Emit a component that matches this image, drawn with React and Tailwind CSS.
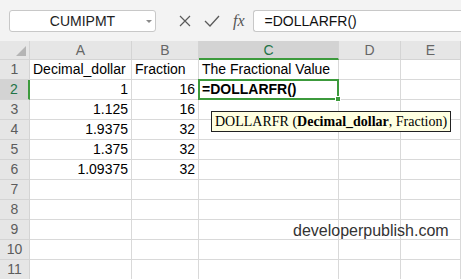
const cols = ["A", "B", "C", "D", "E"];

const rows = [
  ["Decimal_dollar", "Fraction", "The Fractional Value", "", ""],
  ["1", "16", "", "", ""],
  ["1.125", "16", "", "", ""],
  ["1.9375", "32", "", "", ""],
  ["1.375", "32", "", "", ""],
  ["1.09375", "32", "", "", ""],
  ["", "", "", "", ""],
  ["", "", "", "", ""],
  ["", "", "", "", ""],
  ["", "", "", "", ""],
  ["", "", "", "", ""]
];

const isNum = v => /^[0-9.]+$/.test(v);

const Toolbar = () => {
  return <div className="flex h-[41px] items-start bg-[#f3f3f3] pt-[10px]">
      <div className="relative ml-[9px] flex h-[22px] w-[147px] items-center justify-center rounded-[3px] border border-[#c8c8c8] bg-white text-[14px] text-[#222]">
        CUMIPMT
        <span className="absolute right-[3px] top-[9px] h-0 w-0 border-x-[3px] border-t-[3px] border-x-transparent border-t-[#8a8a8a]" />
      </div>
      <div className="ml-[22px] flex h-[22px] items-center gap-[13px] text-[#555]">
        <svg width="12" height="12" viewBox="0 0 12 12" className="ml-[1px]">
          <path d="M1 1 L11 11 M11 1 L1 11" stroke="#5a5a5a" strokeWidth="1.2" fill="none" />
        </svg>
        <svg width="16" height="12" viewBox="0 0 16 12">
          <path d="M1 6 L6 11 L15 1" stroke="#5a5a5a" strokeWidth="1.3" fill="none" />
        </svg>
        <span className="font-['Liberation_Serif',serif] text-[16px] italic leading-none text-[#555]">fx</span>
      </div>
      <div className="ml-[8px] flex h-[22px] flex-1 items-center rounded-l-[3px] border border-r-0 border-[#c8c8c8] bg-white pl-[11px] text-[14px] text-[#111]">
        =DOLLARFR()
      </div>
    </div>;
};

const Sheet = () => {
  return <div className="grid grid-cols-[30px_102px_67px_140px_62px_1fr] text-[14px]">
      <div className="relative h-[19px] border-b border-r border-[#d4d4d4] bg-[#e6e6e6]">
        <span className="absolute bottom-[3px] right-[3px] h-0 w-0 border-b-[10px] border-l-[10px] border-b-[#b5b5b5] border-l-transparent" />
      </div>
      {cols.map(c => <div key={c} className={c === "C" ? "flex h-[19px] items-center justify-center border-b-2 border-r border-b-[#3c9a3c] border-r-[#d4d4d4] bg-[#d3d3d3] pt-[1px] text-[#217346]" : "flex h-[19px] items-center justify-center border-b border-r border-[#d4d4d4] bg-[#e6e6e6] text-[#666]"}>
          {c}
        </div>)}
      {rows.map((r, i) => <Row key={i} n={i + 1} cells={r} />)}
    </div>;
};

const Row = ({
  n,
  cells
}) => {
  const sel = n === 2;
  return <>
      <div className={sel ? "flex h-[20px] items-center justify-center border-b border-r-2 border-b-[#d4d4d4] border-r-[#3c9a3c] bg-[#d3d3d3] text-[#217346]" : "flex h-[20px] items-center justify-center border-b border-r border-[#d4d4d4] bg-[#e6e6e6] text-[#5c5c5c]"}>
        {n}
      </div>
      {cells.map((v, j) => {
      if (sel && j === 2) {
        return <div key={j} className="relative -ml-[1px] -mt-[1px] flex h-[21px] items-center border-2 border-[#3c9a3c] bg-white pl-[2px] font-bold text-black">
              =DOLLARFR()
              <span className="absolute -bottom-[4px] -right-[4px] h-[6px] w-[6px] border border-white bg-[#3c9a3c]" />
            </div>;
      }
      return <div key={j} className={isNum(v) ? "flex h-[20px] items-center justify-end border-b border-r border-[#d9d9d9] pr-[3px] text-black" : "flex h-[20px] items-center overflow-visible whitespace-nowrap border-b border-r border-[#d9d9d9] pl-[3px] text-black"}>
            {v}
          </div>;
    })}
    </>;
};

export default function App() {
  return <div className="relative h-[279px] w-[461px] overflow-hidden bg-white font-['Liberation_Sans',Arial,sans-serif]">
      <Toolbar />
      <Sheet />
      <div className="absolute left-[211px] top-[111px] whitespace-nowrap border border-[#222] bg-[#ffffe1] px-[3px] py-[1px] font-['Liberation_Serif',serif] text-[14px] leading-[17px] text-black">
        DOLLARFR (<b>Decimal_dollar</b>, Fraction)
      </div>
      <div className="absolute left-[293px] top-[219px] text-[16px] text-[#333]">developerpublish.com</div>
    </div>;
}
